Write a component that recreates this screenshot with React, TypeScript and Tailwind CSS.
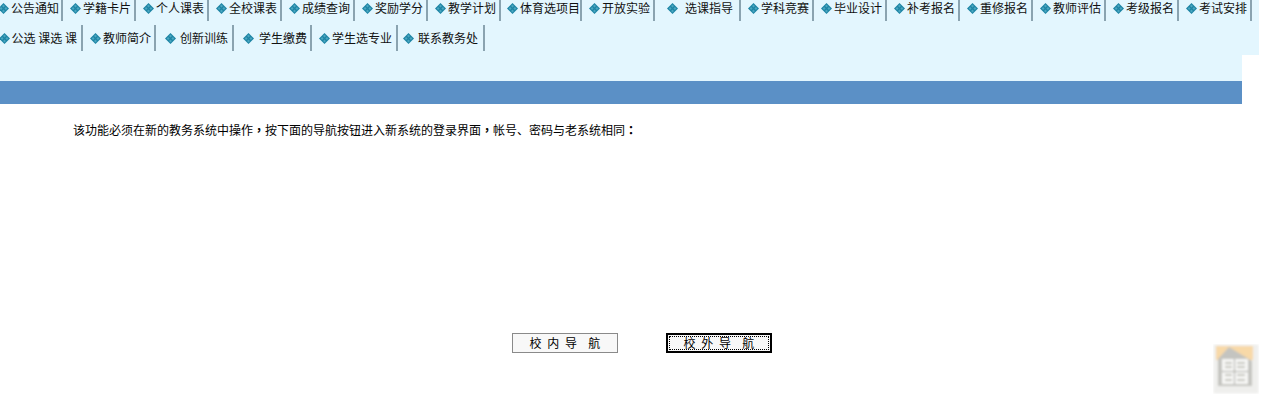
import React from "react";

type NavItem = { label: string; box: string; gap: string };

const rowOne: NavItem[] = [
  { label: "公告通知", box: "w-[63px] pr-[2px]", gap: "gap-[2px]" },
  { label: "学籍卡片", box: "w-[73px] pr-[3px]", gap: "gap-[2px]" },
  { label: "个人课表", box: "w-[73px] pr-[3px]", gap: "gap-[2px]" },
  { label: "全校课表", box: "w-[73px] pr-[3px]", gap: "gap-[2px]" },
  { label: "成绩查询", box: "w-[73px] pr-[3px]", gap: "gap-[2px]" },
  { label: "奖励学分", box: "w-[73px] pr-[3px]", gap: "gap-[2px]" },
  { label: "教学计划", box: "w-[73px] pr-[3px]", gap: "gap-[2px]" },
  { label: "体育选项目", box: "w-[81px]", gap: "gap-[2px]" },
  { label: "开放实验", box: "w-[73px] pr-[3px]", gap: "gap-[2px]" },
  { label: "选课指导", box: "w-[86px] pr-[6px]", gap: "gap-[7px]" },
  { label: "学科竞赛", box: "w-[73px] pr-[3px]", gap: "gap-[2px]" },
  { label: "毕业设计", box: "w-[73px] pr-[3px]", gap: "gap-[2px]" },
  { label: "补考报名", box: "w-[73px] pr-[3px]", gap: "gap-[2px]" },
  { label: "重修报名", box: "w-[73px] pr-[3px]", gap: "gap-[2px]" },
  { label: "教师评估", box: "w-[73px] pr-[3px]", gap: "gap-[2px]" },
  { label: "考级报名", box: "w-[73px] pr-[3px]", gap: "gap-[2px]" },
  { label: "考试安排", box: "w-[73px] pr-[3px]", gap: "gap-[2px]" },
];

const rowTwo: NavItem[] = [
  { label: "公选 课选 课", box: "w-[83px] pr-[4px]", gap: "gap-[2px]" },
  { label: "教师简介", box: "w-[73px] pr-[3px]", gap: "gap-[2px]" },
  { label: "创新训练", box: "w-[78px] pr-[4px]", gap: "gap-[4px]" },
  { label: "学生缴费", box: "w-[78px] pr-[3px]", gap: "gap-[5px]" },
  { label: "学生选专业", box: "w-[86px] pr-[4px]", gap: "gap-[2px]" },
  { label: "联系教务处", box: "w-[87px] pr-[5px]", gap: "gap-[4px]" },
];

// four small diamonds packed into one
function Bullet() {
  return (
    <svg width="11" height="11" viewBox="0 0 11 11" className="shrink-0">
      <path d="M5.5 0 11 5.5 5.5 11 0 5.5Z" fill="#1d84a4" />
      <path d="M5.5 1.6 7 3.1 5.5 4.6 4 3.1ZM5.5 6.4 7 7.9 5.5 9.4 4 7.9ZM3.1 4 4.6 5.5 3.1 7 1.6 5.5ZM7.9 4 9.4 5.5 7.9 7 6.4 5.5Z" fill="#4aa6c0" />
    </svg>
  );
}

function NavRow({ items, className }: { items: NavItem[]; className: string }) {
  return (
    <div className={`flex h-[26px] ${className}`}>
      {items.map((it) => (
        <div
          key={it.label}
          className={`flex shrink-0 items-center justify-end whitespace-pre border-r-2 border-[#8aa3b0] ${it.box} ${it.gap}`}
        >
          <Bullet />
          <span>{it.label}</span>
        </div>
      ))}
    </div>
  );
}

function HouseBadge() {
  return (
    <div className="absolute left-[1213px] top-[344px]">
      <svg width="46" height="50" viewBox="0 0 46 50">
        <defs>
          <filter id="soft">
            <feGaussianBlur stdDeviation="0.8" />
          </filter>
        </defs>
        <g filter="url(#soft)">
          <rect x="0.5" y="0.5" width="45" height="49" fill="#efefed" />
          <rect x="3" y="2" width="37" height="14" fill="#f8d9a8" />
          <path d="M16 3 39 17V42H5V15Z" fill="#c4c4c0" />
          <rect x="9" y="15" width="26" height="25" fill="#f8f8f6" />
          <path d="M21.5 15V40M9 27.5H35" stroke="#a4a49e" strokeWidth="1" />
          <path d="M12 19H19M12 23H19M24 19H32M24 23H32M12 31H19M12 36H19M24 31H32M24 36H32" stroke="#b2b2ac" strokeWidth="1.3" />
        </g>
      </svg>
    </div>
  );
}

// the old page's comma and colon sit in the middle of their cell
function Mark({ children }: { children: React.ReactNode }) {
  return <span className="font-['Noto_Sans_CJK_TC',sans-serif] font-bold">{children}</span>;
}

export default function App() {
  return (
    <div className="relative h-[402px] overflow-hidden bg-white font-['Noto_Sans_CJK_SC','Liberation_Sans',sans-serif] text-[12px] leading-[14px] text-[#111] [text-spacing-trim:space-all]">
      <div className="h-[55px] w-[1259px] overflow-hidden bg-[#e3f6fe]">
        <NavRow items={rowOne} className="-mt-[5px]" />
        <NavRow items={rowTwo} className="mt-[4px]" />
      </div>
      <div className="h-[26px] w-[1242px] bg-[#e3f6fe]" />
      <div className="h-[23px] w-[1242px] bg-[#5b90c6]" />

      <p className="mt-[19px] pl-[73px] text-black">
        该功能必须在新的教务系统中操作<Mark>，</Mark>按下面的导航按钮进入新系统的登录界面<Mark>，</Mark>帐号、密码与老系统相同<Mark>：</Mark>
      </p>

      <div className="mt-[196px] flex w-[1284px] justify-center gap-[48px]">
        <button className="flex h-[20px] w-[106px] items-center justify-center whitespace-pre border border-[#8a8a8a] bg-[#f8f8f8] text-black [word-spacing:3px]">
          校 内 导  航
        </button>
        <button className="flex h-[20px] w-[106px] items-center justify-center whitespace-pre border-2 border-black bg-[#f8f8f8] text-black outline-1 outline-offset-[-4px] outline-dotted outline-black [word-spacing:3px]">
          校 外 导  航
        </button>
      </div>

      <HouseBadge />
    </div>
  );
}
